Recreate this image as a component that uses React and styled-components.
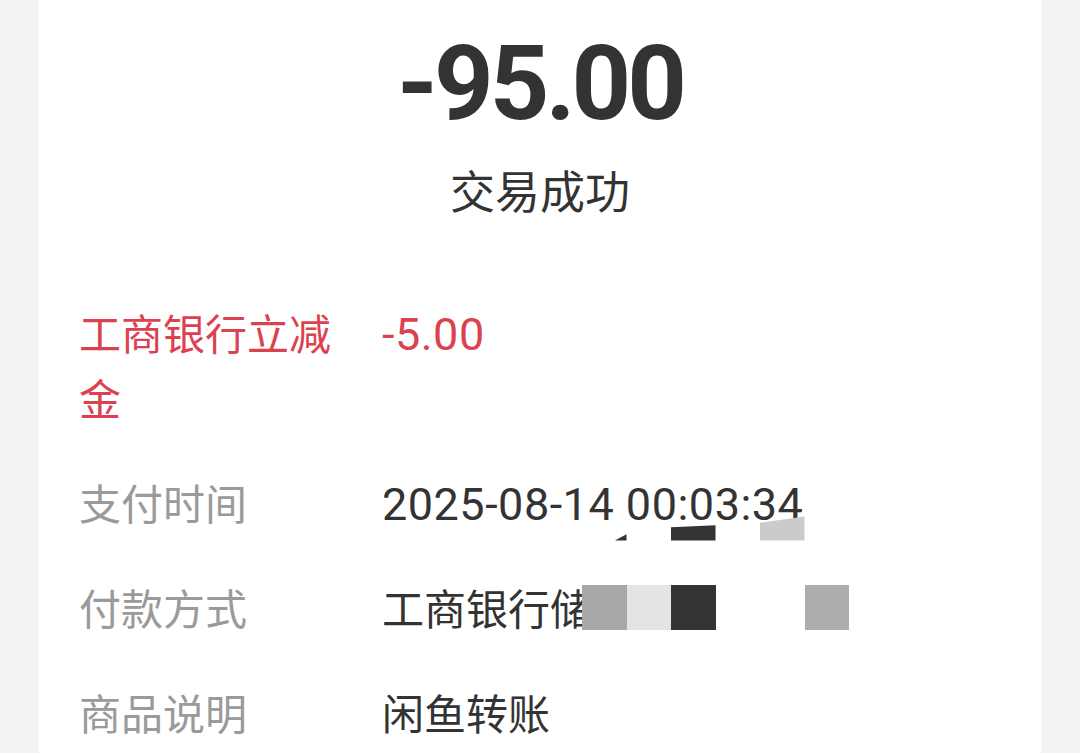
import React from "react";
import styled, { createGlobalStyle } from "styled-components";

const GlobalStyle = createGlobalStyle`
  html, body {
    margin: 0;
    padding: 0;
    background-color: #f3f3f3;
  }
  body {
    font-family: Roboto, "Noto Sans CJK SC", sans-serif;
    color: #333;
  }
`;

const Page = styled.div`
  display: flex;
  padding: 0 39px;
  min-height: 100vh;
`;

const Card = styled.div`
  flex: 1;
  display: flex;
  flex-direction: column;
  background-color: #fff;
  min-height: 100vh;
`;

const Header = styled.div`
  display: flex;
  flex-direction: column;
  align-items: center;
  padding-top: 32px;
`;

const Amount = styled.div`
  font-family: Roboto, sans-serif;
  font-weight: 700;
  font-size: 104px;
  line-height: 104px;
  letter-spacing: -4px;
  color: #333;
`;

const Status = styled.div`
  margin-top: 31px;
  font-family: "Noto Sans CJK SC", sans-serif;
  font-size: 45px;
  line-height: 45px;
  color: #333;
`;

const Details = styled.div`
  position: relative;
  margin-top: 87px;
  padding: 0 40px;
  display: flex;
  flex-direction: column;
  gap: 40px;
`;

const Row = styled.div`
  display: grid;
  grid-template-columns: 270px 1fr;
  column-gap: 33px;
  font-family: "Noto Sans CJK SC", sans-serif;
  font-size: 42px;
  line-height: 65px;
`;

const Label = styled.div`
  color: ${(p) => (p.$accent ? "#dc4150" : "#9a9a9a")};
`;

const Value = styled.div`
  color: ${(p) => (p.$accent ? "#dc4150" : "#333")};
  white-space: nowrap;
`;

const Num = styled.span`
  font-family: Roboto, sans-serif;
  font-size: 45px;
  line-height: 1;
  letter-spacing: 0.5px;
`;

// redaction mosaic laid over the payment rows
const Mosaic = styled.div`
  position: absolute;
  left: 543px;
  top: 197px;
  display: grid;
  grid-template-columns: repeat(6, 44.5px);
  grid-template-rows: repeat(3, 44.5px);
`;

const Cell = styled.div`
  background-color: ${(p) => p.$color || "transparent"};
  clip-path: ${(p) => p.$clip || "none"};
`;

const cells = [
  { color: "#333", clip: "polygon(74% 100%, 100% 86%, 100% 100%)" },
  {},
  { color: "#333", clip: "polygon(0 70%, 100% 66%, 100% 100%, 0 100%)" },
  {},
  { color: "#cbcbcb", clip: "polygon(0 60%, 100% 46%, 100% 100%, 0 100%)" },
  {},
  {}, {}, {}, {}, {}, {},
  { color: "#a8a8a8" },
  { color: "#e4e4e4" },
  { color: "#333" },
  { color: "#fff" },
  { color: "#fff" },
  { color: "#adadad" },
];

export default function App() {
  return (
    <Page>
      <GlobalStyle />
      <Card>
        <Header>
          <Amount>-95.00</Amount>
          <Status>交易成功</Status>
        </Header>
        <Details>
          <Row>
            <Label $accent>工商银行立减金</Label>
            <Value $accent>
              <Num>-5.00</Num>
            </Value>
          </Row>
          <Row>
            <Label>支付时间</Label>
            <Value>
              <Num>2025-08-14 00:03:34</Num>
            </Value>
          </Row>
          <Row>
            <Label>付款方式</Label>
            <Value>工商银行储蓄卡</Value>
          </Row>
          <Row>
            <Label>商品说明</Label>
            <Value>闲鱼转账</Value>
          </Row>
          <Mosaic>
            {cells.map((c, i) => (
              <Cell key={i} $color={c.color} $clip={c.clip} />
            ))}
          </Mosaic>
        </Details>
      </Card>
    </Page>
  );
}
